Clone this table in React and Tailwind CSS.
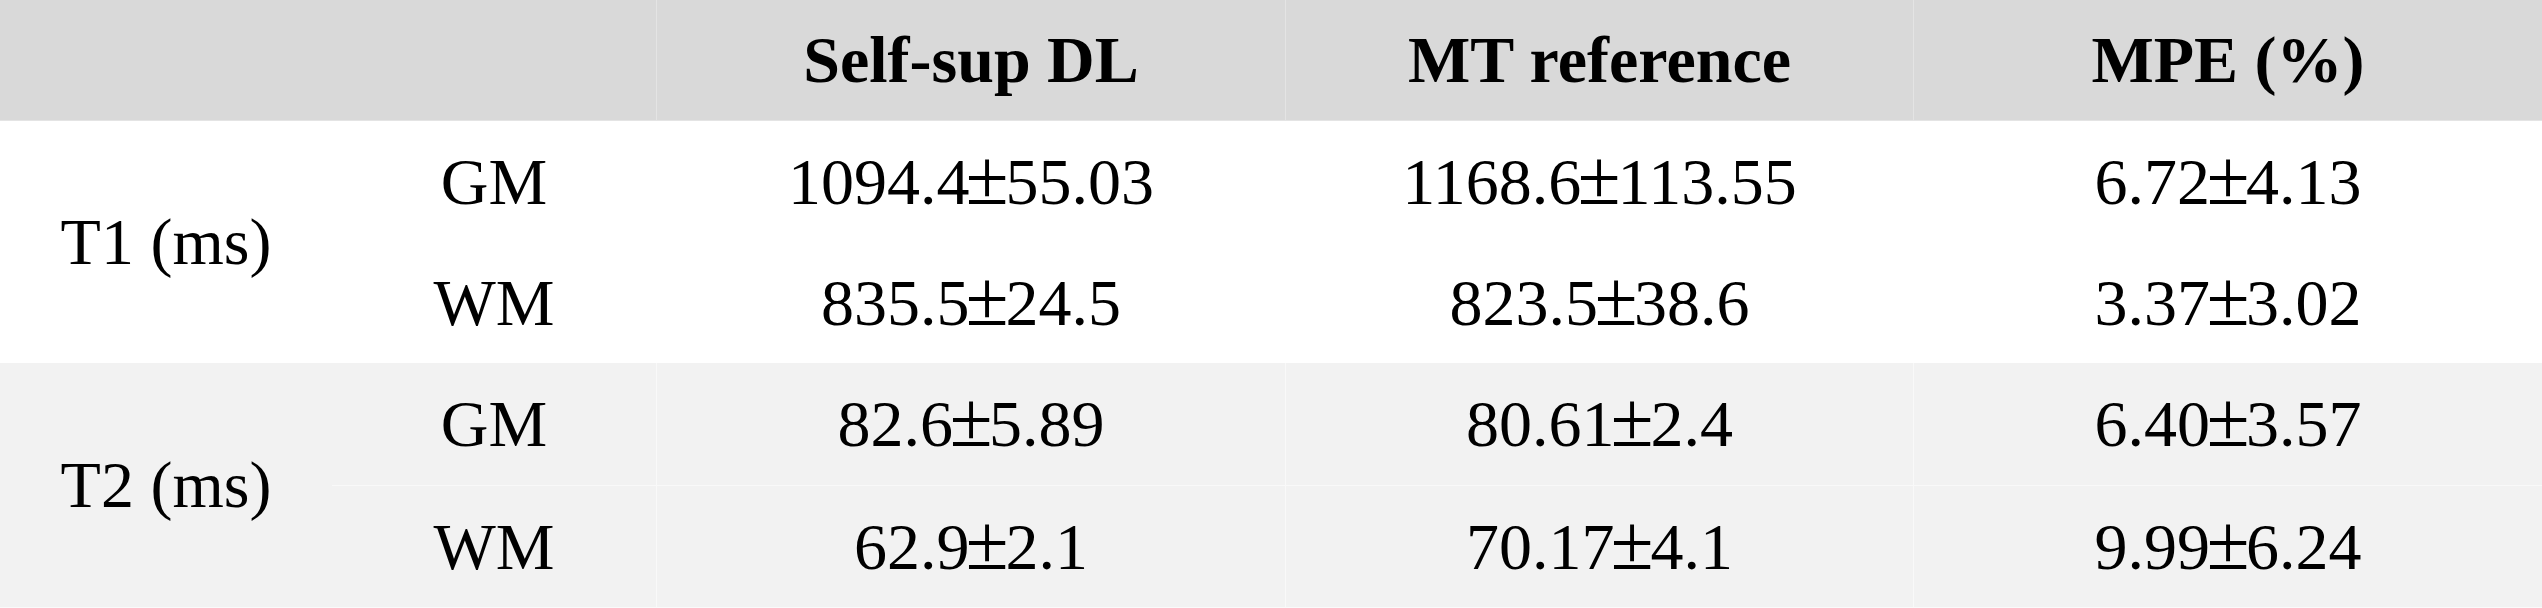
const rows = [
  {
    label: "T1 (ms)",
    bg: "bg-white",
    items: [
      { tissue: "GM", dl: "1094.4±55.03", mt: "1168.6±113.55", mpe: "6.72±4.13" },
      { tissue: "WM", dl: "835.5±24.5", mt: "823.5±38.6", mpe: "3.37±3.02" },
    ],
  },
  {
    label: "T2 (ms)",
    bg: "bg-[#f2f2f2]",
    items: [
      { tissue: "GM", dl: "82.6±5.89", mt: "80.61±2.4", mpe: "6.40±3.57" },
      { tissue: "WM", dl: "62.9±2.1", mt: "70.17±4.1", mpe: "9.99±6.24" },
    ],
  },
];

function Cell({ children, className = "" }) {
  return (
    <div className={"flex items-center justify-center " + className}>
      {children}
    </div>
  );
}

// mean ± sd, the plus-minus sign drawn a bit bigger like the Times original
function Value({ text }) {
  const [mean, sd] = text.split("±");
  return (
    <span>
      {mean}
      <span className="inline-block scale-[1.18] origin-[50%_84%]">±</span>
      {sd}
    </span>
  );
}

export default function App() {
  return (
    <div className="w-[2542px] h-[608px] bg-[#fafafa] font-['Liberation_Serif','Times_New_Roman',serif] text-[66px] leading-none text-black">
      <div className="grid grid-cols-[332px_324px_629px_628px_629px] grid-rows-[121px_121px_121px_122px_122px]">
        <Cell className="col-span-2 bg-[#d9d9d9] border-b border-[#e4e4e4]" />
        <Cell className="bg-[#d9d9d9] border-l border-b border-[#e4e4e4] font-bold">Self-sup DL</Cell>
        <Cell className="bg-[#d9d9d9] border-l border-b border-[#e4e4e4] font-bold">MT reference</Cell>
        <Cell className="bg-[#d9d9d9] border-l border-b border-[#e4e4e4] font-bold">MPE (%)</Cell>

        {rows.map((group) =>
          group.items.map((r, i) => (
            <>
              {i === 0 && (
                <Cell key={group.label} className={"row-span-2 " + group.bg}>
                  {group.label}
                </Cell>
              )}
              <Cell className={group.bg + (i === 1 ? " border-t border-white/50" : "")}>{r.tissue}</Cell>
              <Cell className={group.bg + " border-l border-white/50" + (i === 1 ? " border-t" : "")}><Value text={r.dl} /></Cell>
              <Cell className={group.bg + " border-l border-white/50" + (i === 1 ? " border-t" : "")}><Value text={r.mt} /></Cell>
              <Cell className={group.bg + " border-l border-white/50" + (i === 1 ? " border-t" : "")}><Value text={r.mpe} /></Cell>
            </>
          ))
        )}
      </div>
    </div>
  );
}
